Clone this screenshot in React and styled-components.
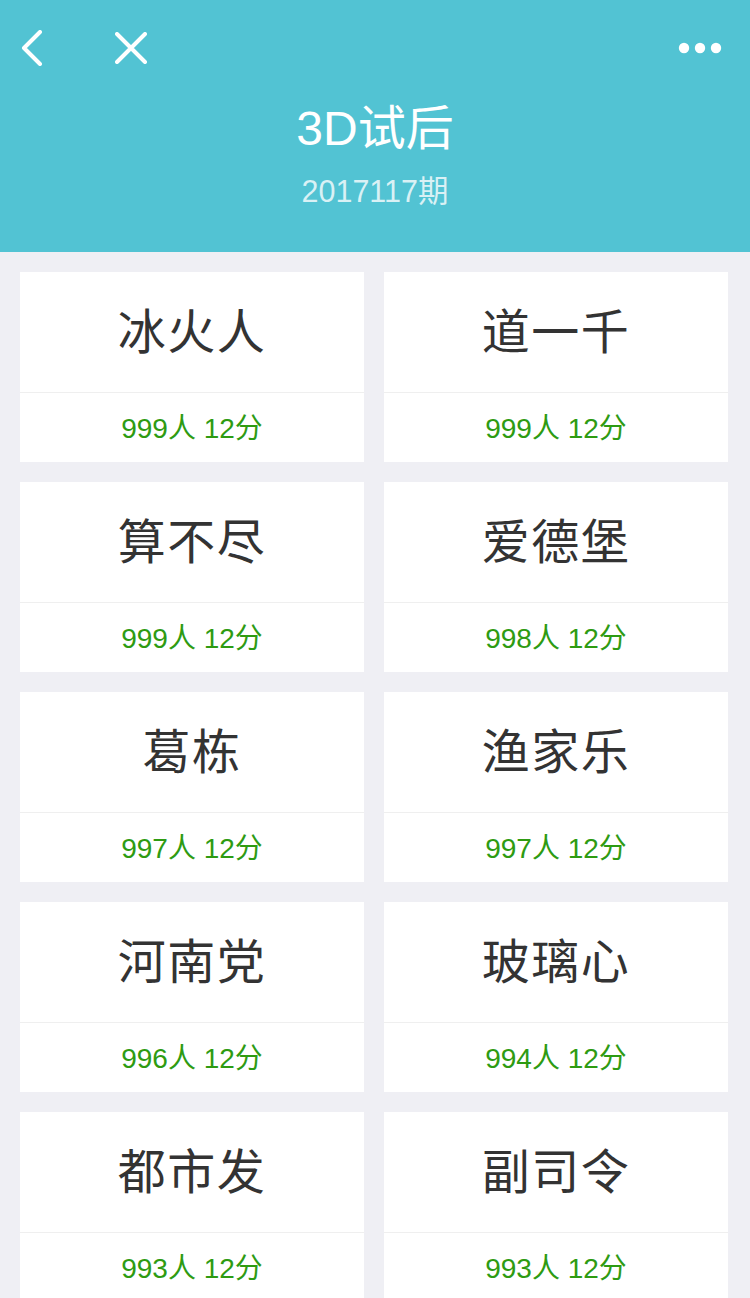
import React from "react";
import styled, { createGlobalStyle } from "styled-components";

const GlobalStyle = createGlobalStyle`
  html, body {
    margin: 0;
    padding: 0;
    background: #efeff4;
    font-family: "Liberation Sans", "Noto Sans CJK SC", sans-serif;
  }
`;

const Page = styled.div`
  width: 750px;
  min-height: 1298px;
  background: #efeff4;
`;

const Header = styled.header`
  background: #52c3d3;
  height: 252px;
  display: flex;
  flex-direction: column;
  align-items: stretch;
`;

const NavBar = styled.div`
  height: 96px;
  display: flex;
  align-items: center;
  padding: 0 28px 0 20px;
`;

const NavButton = styled.div`
  width: ${(p) => p.$w || 40}px;
  height: 40px;
  display: flex;
  align-items: center;
  justify-content: center;
  margin-left: ${(p) => p.$ml || 0}px;
`;

const Spacer = styled.div`
  flex: 1;
`;

const Title = styled.h1`
  margin: 3px 0 0;
  text-align: center;
  color: #ffffff;
  font-weight: 400;
  font-size: 48px;
  line-height: 60px;
`;

const Subtitle = styled.div`
  margin-top: 12px;
  text-align: center;
  color: rgba(255, 255, 255, 0.78);
  font-size: 30.5px;
  line-height: 40px;
`;

const Grid = styled.div`
  display: grid;
  grid-template-columns: 344px 344px;
  gap: 20px;
  padding: 20px 22px 20px 20px;
`;

const Card = styled.div`
  background: #ffffff;
  height: 190px;
  display: flex;
  flex-direction: column;
`;

const Name = styled.div`
  height: 121px;
  box-sizing: border-box;
  padding-bottom: 9px;
  display: flex;
  align-items: center;
  justify-content: center;
  color: #333333;
  font-size: 48px;
  font-weight: 400;
  letter-spacing: 1.5px;
  border-bottom: 1px solid #efefef;
`;

const Stats = styled.div`
  flex: 1;
  padding-bottom: 4px;
  display: flex;
  align-items: center;
  justify-content: center;
  color: #2e9b12;
  font-size: 28px;
`;

const items = [
  ["冰火人", 999],
  ["道一千", 999],
  ["算不尽", 999],
  ["爱德堡", 998],
  ["葛栋", 997],
  ["渔家乐", 997],
  ["河南党", 996],
  ["玻璃心", 994],
  ["都市发", 993],
  ["副司令", 993],
];

const BackIcon = () => (
  <svg width="24" height="36" viewBox="0 0 24 36">
    <polyline
      points="20,2 4,18 20,34"
      fill="none"
      stroke="#fff"
      strokeWidth="4"
      strokeLinecap="round"
      strokeLinejoin="round"
    />
  </svg>
);

const CloseIcon = () => (
  <svg width="32" height="32" viewBox="0 0 32 32">
    <path
      d="M2 2 L30 30 M30 2 L2 30"
      fill="none"
      stroke="#fff"
      strokeWidth="4"
      strokeLinecap="round"
    />
  </svg>
);

const MoreIcon = () => (
  <svg width="44" height="12" viewBox="0 0 44 12">
    <circle cx="6" cy="6" r="5.2" fill="#fff" />
    <circle cx="22" cy="6" r="5.2" fill="#fff" />
    <circle cx="38" cy="6" r="5.2" fill="#fff" />
  </svg>
);

export default function App() {
  return (
    <Page>
      <GlobalStyle />
      <Header>
        <NavBar>
          <NavButton $w={24}>
            <BackIcon />
          </NavButton>
          <NavButton $w={32} $ml={71}>
            <CloseIcon />
          </NavButton>
          <Spacer />
          <NavButton $w={44}>
            <MoreIcon />
          </NavButton>
        </NavBar>
        <Title>3D试后</Title>
        <Subtitle>2017117期</Subtitle>
      </Header>
      <Grid>
        {items.map(([name, n], i) => (
          <Card key={i}>
            <Name>{name}</Name>
            <Stats>{n}人 12分</Stats>
          </Card>
        ))}
      </Grid>
    </Page>
  );
}
